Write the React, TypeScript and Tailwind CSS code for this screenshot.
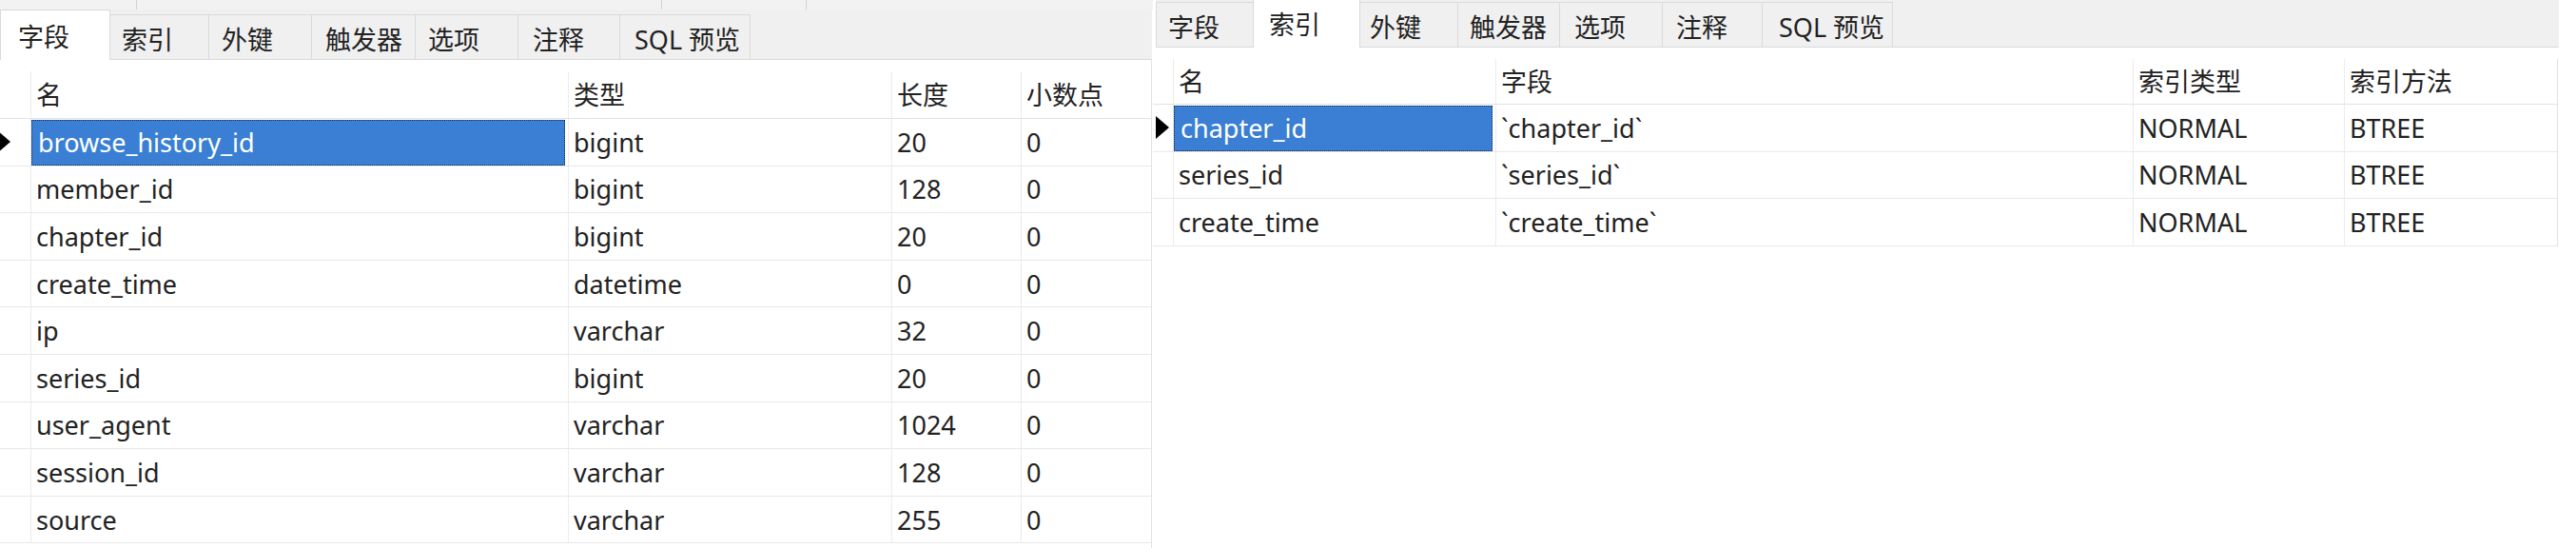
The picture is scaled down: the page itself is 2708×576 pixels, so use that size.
import React from 'react';
import clsx from 'clsx';

type Tab = { label: string; cls: string };

const LEFT_TABS: Tab[] = [
  { label: '字段', cls: 'w-[116px] pl-[18px]' },
  { label: '索引', cls: 'w-[104px] pl-[12px]' },
  { label: '外键', cls: 'w-[108px] pl-[13px]' },
  { label: '触发器', cls: 'w-[109px] pl-[14px]' },
  { label: '选项', cls: 'w-[108px] pl-[13px]' },
  { label: '注释', cls: 'w-[107px] pl-[15px]' },
  { label: 'SQL 预览', cls: 'w-[137px] pl-[15px]' },
];

const RIGHT_TABS: Tab[] = [
  { label: '字段', cls: 'w-[102px] pl-[12px]' },
  { label: '索引', cls: 'w-[113px] pl-[16px]' },
  { label: '外键', cls: 'w-[103px] pl-[10px]' },
  { label: '触发器', cls: 'w-[107px] pl-[12px]' },
  { label: '选项', cls: 'w-[108px] pl-[15px]' },
  { label: '注释', cls: 'w-[105px] pl-[14px]' },
  { label: 'SQL 预览', cls: 'w-[137px] pl-[17px]' },
];

const FIELDS = [
  ['browse_history_id', 'bigint', '20', '0'],
  ['member_id', 'bigint', '128', '0'],
  ['chapter_id', 'bigint', '20', '0'],
  ['create_time', 'datetime', '0', '0'],
  ['ip', 'varchar', '32', '0'],
  ['series_id', 'bigint', '20', '0'],
  ['user_agent', 'varchar', '1024', '0'],
  ['session_id', 'varchar', '128', '0'],
  ['source', 'varchar', '255', '0'],
];

const INDEXES = [
  ['chapter_id', '`chapter_id`', 'NORMAL', 'BTREE'],
  ['series_id', '`series_id`', 'NORMAL', 'BTREE'],
  ['create_time', '`create_time`', 'NORMAL', 'BTREE'],
];

function TabStrip({ tabs, active, className }: { tabs: Tab[]; active: number; className: string }) {
  return (
    <div className={clsx('flex items-end overflow-hidden bg-[#f0f0f0]', className)}>
      {tabs.map((t, i) =>
        i === active ? (
          <div
            key={t.label}
            className={clsx('flex h-[53px] shrink-0 items-center border-x border-t border-[#d9d9d9] bg-white pt-[2px]', t.cls)}
          >
            {t.label}
          </div>
        ) : (
          <div
            key={t.label}
            className={clsx(
              'flex h-[48px] shrink-0 items-center border-y border-[#dadada] pt-[4px]',
              i === 0 && 'border-l',
              i + 1 !== active && 'border-r',
              t.cls,
            )}
          >
            {t.label}
          </div>
        ),
      )}
      <div className="h-px flex-1 bg-[#dadada]" />
    </div>
  );
}

function Arrow({ clip }: { clip?: boolean }) {
  return clip ? (
    <svg width="11" height="24" viewBox="0 0 11 24">
      <polygon points="-3,0 11,12 -3,24" fill="#000" />
    </svg>
  ) : (
    <svg width="14" height="24" viewBox="0 0 14 24">
      <polygon points="0,0 14,12 0,24" fill="#000" />
    </svg>
  );
}

function Table({
  cols,
  header,
  rows,
  arrow,
  headerCls,
  indCls,
}: {
  cols: string;
  header: string[];
  rows: string[][];
  arrow: React.ReactNode;
  headerCls: string;
  indCls: string;
}) {
  return (
    <div className="flex flex-col">
      <div className={clsx('grid border-b border-[#e2e2e2]', cols, headerCls)}>
        <div />
        {header.map((h) => (
          <div key={h} className="flex items-center border-l border-[#ececec] pl-[5px]">
            {h}
          </div>
        ))}
      </div>
      {rows.map((r, i) => (
        <div key={r[0]} className={clsx('grid h-[49.6px] border-b border-[#e8e8e8]', cols)}>
          <div className={clsx('flex items-center', indCls)}>{i === 0 && arrow}</div>
          {r.map((c, j) =>
            i === 0 && j === 0 ? (
              <div key={j} className="flex border-l border-[#ececec] pt-px pr-[3px]">
                <div className="flex flex-1 items-center border border-dotted border-[#1d2c44] bg-[#3a7fd4] pl-[6px] text-white">
                  {c}
                </div>
              </div>
            ) : (
              <div key={j} className="flex items-center border-l border-[#ececec] pl-[5px]">
                {c}
              </div>
            ),
          )}
        </div>
      ))}
    </div>
  );
}

export default function App() {
  return (
    <div className="flex h-[576px] w-[2708px] overflow-hidden bg-white font-['Noto_Sans','Noto_Sans_CJK_SC',sans-serif] text-[27px] leading-none text-[#222]">
      {/* left: 字段 tab */}
      <div className="flex w-[1212px] shrink-0 flex-col">
        <div className="flex flex-col">
          <div className="flex h-[10px] bg-[#f2f2f2]">
            <div className="w-[143px]" />
            <div className="w-px bg-[#d2d2d2]" />
            <div className="w-[551px]" />
            <div className="w-px bg-[#d2d2d2]" />
            <div className="w-[151px]" />
            <div className="w-px bg-[#d2d2d2]" />
          </div>
          <TabStrip tabs={LEFT_TABS} active={0} className="h-[53px] w-[1211px]" />
        </div>
        <div className="w-[1211px] flex-1 border-r border-[#e2e2e2] pt-[12px]">
          <Table
            cols="grid-cols-[32px_565px_340px_136px_137px]"
            header={['名', '类型', '长度', '小数点']}
            rows={FIELDS}
            arrow={<Arrow clip />}
            headerCls="h-[50px]"
            indCls="pl-0"
          />
        </div>
      </div>

      {/* right: 索引 tab */}
      <div className="flex w-[1496px] shrink-0 flex-col">
        <TabStrip tabs={RIGHT_TABS} active={1} className="ml-[3px] h-[50px] w-[1475px]" />
        <div className="w-[1477px] pt-[12px]">
          <div className="border-r border-[#e2e2e2]">
            <Table
              cols="grid-cols-[21px_339px_670px_222px_224px]"
              header={['名', '字段', '索引类型', '索引方法']}
              rows={INDEXES}
              arrow={<Arrow />}
              headerCls="h-[48px]"
              indCls="pl-[3px]"
            />
          </div>
        </div>
      </div>
    </div>
  );
}
